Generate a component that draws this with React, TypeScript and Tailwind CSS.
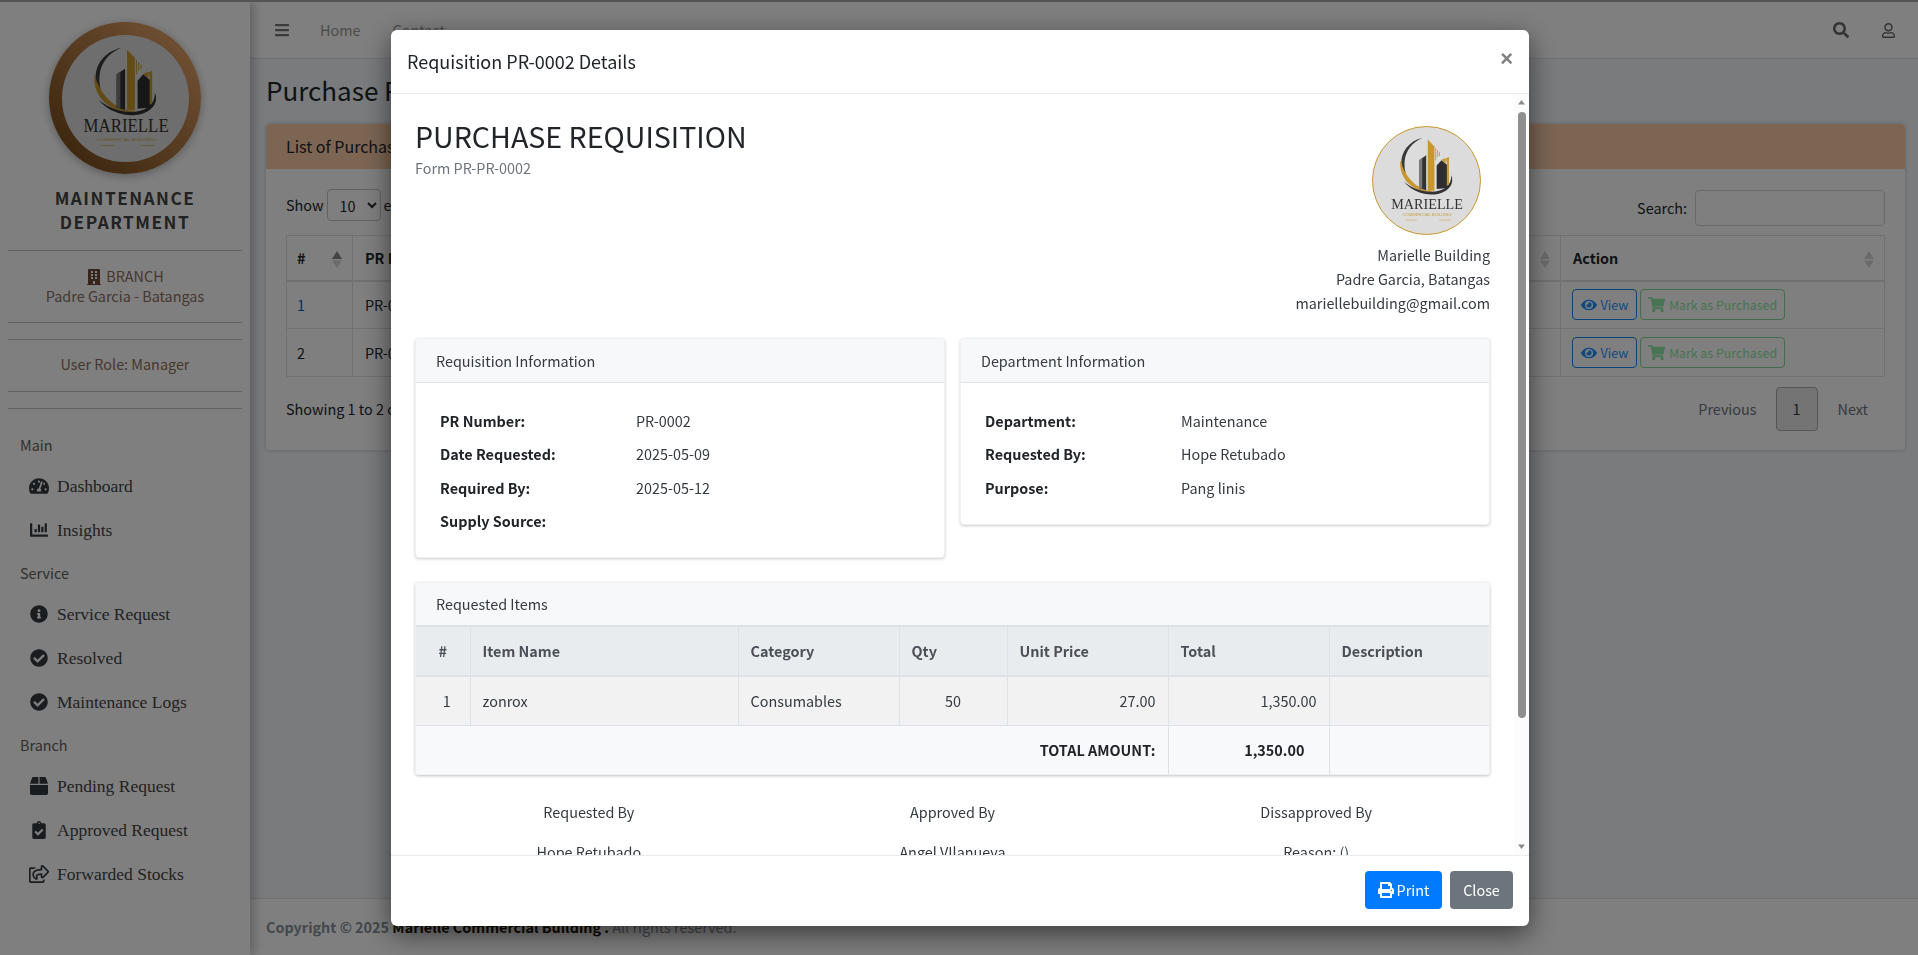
import { FaBars, FaBox, FaBuilding, FaChartBar, FaCheckCircle, FaClipboardCheck, FaEye, FaInfoCircle, FaPrint, FaRegShareSquare, FaRegUser, FaSearch, FaShoppingCart, FaTachometerAlt } from 'react-icons/fa';

const navSections = [
  {
    title: 'Main',
    items: [
      { name: 'Dashboard', icon: FaTachometerAlt, size: 'text-[20px]' },
      { name: 'Insights', icon: FaChartBar, size: 'text-[18px]' },
    ],
  },
  {
    title: 'Service',
    items: [
      { name: 'Service Request', icon: FaInfoCircle, size: 'text-[18px]' },
      { name: 'Resolved', icon: FaCheckCircle, size: 'text-[18px]' },
      { name: 'Maintenance Logs', icon: FaCheckCircle, size: 'text-[18px]' },
    ],
  },
  {
    title: 'Branch',
    items: [
      { name: 'Pending Request', icon: FaBox, size: 'text-[18px]' },
      { name: 'Approved Request', icon: FaClipboardCheck, size: 'text-[18px]' },
      { name: 'Forwarded Stocks', icon: FaRegShareSquare, size: 'text-[20px]' },
    ],
  },
];

const requisitionInfo = [
  { label: 'PR Number:', value: 'PR-0002' },
  { label: 'Date Requested:', value: '2025-05-09' },
  { label: 'Required By:', value: '2025-05-12' },
  { label: 'Supply Source:', value: '' },
];

const departmentInfo = [
  { label: 'Department:', value: 'Maintenance' },
  { label: 'Requested By:', value: 'Hope Retubado' },
  { label: 'Purpose:', value: 'Pang linis' },
];

const signatures = [
  { title: 'Requested By', name: 'Hope Retubado' },
  { title: 'Approved By', name: 'Angel VIlanueva' },
  { title: 'Dissapproved By', name: 'Reason: ()' },
];

function Logo({ size }: { size: number }) {
  return (
    <svg width={size} height={size} viewBox="0 0 100 100" className="block">
      <path d="M46.6 10 C33 13 26 24 26.5 34 C27 44 32 50 37 54 C31 48 29 40 29.5 33 C30 22 37 14 46.6 10 Z" fill="#3a3a3a" />
      <path d="M25.5 31 C24 45 33 58 50 60.5 C53 61 56 60.5 58 60 C44 60 31 50 25.5 31 Z" fill="#c8982f" />
      <path d="M28.7 51 C36 60 48 64 58 63 C68 62 75 56 74 48 L73 45 C74 54 66 60 56 60.5 C46 61 36 57 28.7 51 Z" fill="#333333" />
      <path d="M43 31 L49.7 26.5 V59 L43 57 Z" fill="#333333" />
      <path d="M43 31 L46 29 V58 L43 57 Z" fill="#7a7a7a" />
      <path d="M51.2 11.7 L57.4 18.2 V59.5 H51.2 Z" fill="#c8982f" />
      <path d="M58.2 19 L59 20 V31 H58.2 Z M60 21 L60.8 22 V28 H60 Z M61.8 23 L62.6 24 V27 H61.8 Z" fill="#c8982f" />
      <path d="M59.5 36 L64 31 L70 36 V57 L59.5 58 Z" fill="#2e2e2e" />
      <path d="M64 30.5 L68 29 L68 34 Z M68 29.5 L71 28 V54 L69 55 V33 Z" fill="#c8982f" />
      <text x="50.5" y="76.5" textAnchor="middle" textLength="67" lengthAdjust="spacingAndGlyphs" fontFamily="Liberation Serif" fontSize="14" fill="#333333">MARIELLE</text>
      <text x="50.5" y="83.5" textAnchor="middle" textLength="46" lengthAdjust="spacingAndGlyphs" fontFamily="Liberation Sans" fontSize="3" fill="#c8a44d">COMMERCIAL BUILDING</text>
      <path d="M30 87 H41 M62 87 H73" stroke="#c8a44d" strokeWidth="0.5" />
    </svg>
  );
}

function SortArrows({ active = false }: { active?: boolean }) {
  return (
    <svg width="10" height="17" viewBox="0 0 10 17" className="absolute right-2.5 top-[15px]">
      <path d="M5 0 L10 8 H0 Z" fill={active ? '#888888' : '#d6d6d6'} />
      <path d="M5 17 L0 9.5 H10 Z" fill="#d6d6d6" />
    </svg>
  );
}

function InfoCard({ title, rows, className }: { title: string; rows: { label: string; value: string }[]; className: string }) {
  return (
    <div className={`overflow-hidden rounded border border-[#f0f0f0] bg-white shadow-[0_1px_3px_rgba(0,0,0,0.2)] ${className}`}>
      <div className="flex h-[44px] items-center border-b border-[#dfe1e3] bg-[#f7f8fa] px-5 text-[#343a40]">{title}</div>
      <div className="pb-[19px] pl-[24px] pr-5 pt-[21px]">
        {rows.map((row) => (
          <div key={row.label} className="flex h-[33.5px] items-center">
            <div className="w-[196px] font-bold text-[#212529]">{row.label}</div>
            <div className="text-[#343a40]">{row.value}</div>
          </div>
        ))}
      </div>
    </div>
  );
}

function Sidebar() {
  return (
    <aside className="relative z-10 flex w-[250px] shrink-0 flex-col bg-white px-2 pt-[20px] shadow-[4px_0_10px_rgba(0,0,0,0.25)]">
      <div className="mx-auto flex h-[152px] w-[152px] items-center justify-center rounded-full bg-gradient-to-tr from-[#6b4312] to-[#f2ae72] shadow-[0_2px_10px_rgba(0,0,0,0.3)]">
        <div className="overflow-hidden rounded-full bg-[#dcdcdc]">
          <Logo size={127} />
        </div>
      </div>
      <div className="mt-3 text-center text-[17.2px] font-bold leading-6 tracking-[1.5px] text-[#444444]">
        MAINTENANCE
        <br />
        DEPARTMENT
      </div>
      <div className="mt-4 border-y border-[#c4c4c4] pb-[17px] pt-[15px] text-center leading-[19px] text-[#8a6f5e]">
        <FaBuilding className="mr-1 inline-block -translate-y-px text-[16px] text-[#6b4a38]" />
        BRANCH
        <br />
        Padre Garcia - Batangas
      </div>
      <div className="mt-4 border-y border-[#c4c4c4] pb-[15px] pt-[12px] text-center text-[#8a6f5e]">User Role: Manager</div>
      <div className="mt-4 border-t border-[#c4c4c4]" />
      <nav className="mt-[15px]">
        {navSections.map((section) => (
          <div key={section.title}>
            <div className="flex h-[40px] items-center px-3 pt-[2px] text-[#606060]">{section.title}</div>
            {section.items.map((item) => (
              <div key={item.name} className="flex h-[44px] items-center pl-[15px] font-['Liberation_Serif',serif] text-[17.5px] text-[#444444]">
                <span className="flex w-[34px] justify-center pr-[3px]">
                  <item.icon className={`${item.size} text-[#343a40]`} />
                </span>
                {item.name}
              </div>
            ))}
          </div>
        ))}
      </nav>
    </aside>
  );
}

function ListPage() {
  return (
    <main className="flex min-w-0 flex-1 flex-col bg-[#f4f6f9]">
      <header className="flex h-[57px] shrink-0 items-center border-b border-[#dee2e6] bg-white pl-6 text-[#999999]">
        <FaBars className="text-[16px] text-[#777777]" />
        <span className="ml-[30px]">Home</span>
        <span className="ml-8">Contact</span>
        <div className="ml-auto flex items-center gap-8 pr-[22px]">
          <FaSearch className="text-[16px] text-[#666666]" />
          <FaRegUser className="text-[15px] text-[#666666]" />
        </div>
      </header>
      <h1 className="ml-4 mt-[14px] text-[26px] leading-[34px] text-[#212529]">Purchase Requisition</h1>
      <section className="ml-4 mr-[13px] mt-[17px] h-[326px] rounded bg-white shadow-[0_0_4px_rgba(0,0,0,0.2)]">
        <div className="flex h-[45px] items-center rounded-t bg-[#fbcba7] px-5 pb-[2px] text-base text-[#212529]">List of Purchase Requisitions</div>
        <div className="px-5 pt-[21px]">
          <div className="flex h-[36px] items-start justify-between">
            <div className="flex -translate-y-px items-center gap-[3px]">
              Show
              <select defaultValue="10" className="h-[32px] w-[54px] rounded border border-[#c5c5c5] bg-white pl-2">
                <option value="10">10</option>
              </select>
              entries
            </div>
            <div className="flex items-center gap-2">
              Search:
              <div className="h-[36px] w-[190px] rounded border border-[#ced4da] bg-white" />
            </div>
          </div>
          <table className="mt-[9px] w-full table-fixed border-collapse border border-[#dee2e6]">
            <colgroup>
              <col className="w-[66px]" />
              <col />
              <col className="w-[324px]" />
            </colgroup>
            <thead>
              <tr className="h-[45px] border-b-2 border-[#dee2e6]">
                <th className="relative border-r border-[#dee2e6] px-2.5 text-left">
                  #
                  <SortArrows active />
                </th>
                <th className="relative border-r border-[#dee2e6] px-3 text-left">
                  PR Number
                  <SortArrows />
                </th>
                <th className="relative px-3 text-left">
                  Action
                  <SortArrows />
                </th>
              </tr>
            </thead>
            <tbody>
              {['PR-0001', 'PR-0002'].map((pr, index) => (
                <tr key={pr} className="h-[48px] border-b border-[#dee2e6]">
                  <td className={`border-r border-[#dee2e6] px-2.5 ${index === 0 ? 'text-[#0f5aa8]' : ''}`}>{index + 1}</td>
                  <td className="border-r border-[#dee2e6] px-3">{pr}</td>
                  <td className="px-[11px]">
                    <div className="flex gap-[3px] text-[12.6px]">
                      <span className="flex h-[31px] w-[65px] items-center justify-center gap-1 rounded border border-[#1088ff] text-[#1c93ff]">
                        <FaEye className="text-[16px]" />
                        View
                      </span>
                      <span className="flex h-[31px] w-[145px] items-center justify-center gap-1 rounded border border-[#80dc98] text-[12.4px] text-[#90e8a6]">
                        <FaShoppingCart className="text-[17px]" />
                        Mark as Purchased
                      </span>
                    </div>
                  </td>
                </tr>
              ))}
            </tbody>
          </table>
          <div className="mt-[10px] flex items-start justify-between">
            <div className="pt-[10px]">Showing 1 to 2 of 2 entries</div>
            <div className="flex items-center pr-[17px] text-[#6c757d]">
              <span>Previous</span>
              <span className="ml-[19px] flex h-[44px] w-[42px] items-center justify-center rounded-sm border border-[#adadad] bg-[#e9e9e9] text-[#333333]">1</span>
              <span className="ml-[20px]">Next</span>
            </div>
          </div>
        </div>
      </section>
      <footer className="mt-auto flex h-[57px] shrink-0 items-center border-t border-[#dee2e6] bg-white pb-[1px] pl-4 text-[#869099]">
        <strong>Copyright © 2025&nbsp;</strong>
        <strong className="text-[#1f1300]">Marielle Commercial Building .</strong>
        <span>&nbsp;All rights reserved.</span>
      </footer>
    </main>
  );
}

function RequisitionModal() {
  return (
    <div className="fixed left-[391px] top-[30px] flex h-[896px] w-[1138px] flex-col overflow-hidden rounded-md bg-white text-[#212529] shadow-[0_8px_28px_rgba(0,0,0,0.55)]">
      <div className="flex h-[64px] shrink-0 items-center justify-between border-b border-[#e9ecef] pl-[16px] pr-[16px]">
        <h5 className="-translate-y-px text-[18px] leading-6">Requisition PR-0002 Details</h5>
        <span className="-translate-y-[3px] font-['Liberation_Sans',sans-serif] text-[22px] font-bold leading-none text-[#7f7f7f]">×</span>
      </div>

      <div className="relative min-h-0 flex-1 overflow-hidden pl-6 pr-[39px] pt-[25px]">
        <div className="flex h-[219px] justify-between">
          <div>
            <h2 className="text-[28.6px] leading-[34px] text-[#212529]">PURCHASE REQUISITION</h2>
            <div className="mt-[3px] text-[#6c757d]">Form PR-PR-0002</div>
          </div>
          <div className="flex flex-col items-end">
            <div className="mr-[9px] mt-[7px] overflow-hidden rounded-full border border-[#c8982f] bg-[#dcdcdc]">
              <Logo size={107} />
            </div>
            <div className="mt-[8px] text-right text-[#343a40]">
              Marielle Building
              <br />
              Padre Garcia, Batangas
              <br />
              mariellebuilding@gmail.com
            </div>
          </div>
        </div>

        <div className="flex items-start gap-[15px]">
          <InfoCard title="Requisition Information" rows={requisitionInfo} className="w-[530px]" />
          <InfoCard title="Department Information" rows={departmentInfo} className="flex-1" />
        </div>

        <div className="mt-6 overflow-hidden rounded border border-[#f0f0f0] shadow-[0_1px_3px_rgba(0,0,0,0.25)]">
          <div className="flex h-[42px] items-center bg-[#f7f8fa] px-5 text-[#343a40]">Requested Items</div>
          <table className="w-full table-fixed border-collapse text-[#343a40]">
            <colgroup>
              <col className="w-[54px]" />
              <col className="w-[268px]" />
              <col className="w-[161px]" />
              <col className="w-[108px]" />
              <col className="w-[161px]" />
              <col className="w-[161px]" />
              <col />
            </colgroup>
            <thead>
              <tr className="h-[50px] border-y-2 border-[#dee2e6] bg-[#e9ecef] text-left font-bold text-[#495057]">
                <th className="border-r border-[#dee2e6] text-center">#</th>
                <th className="border-r border-[#dee2e6] px-3">Item Name</th>
                <th className="border-r border-[#dee2e6] px-3">Category</th>
                <th className="border-r border-[#dee2e6] px-3">Qty</th>
                <th className="border-r border-[#dee2e6] px-3">Unit Price</th>
                <th className="border-r border-[#dee2e6] px-3">Total</th>
                <th className="px-3">Description</th>
              </tr>
            </thead>
            <tbody>
              <tr className="h-[49px] border-b border-[#dee2e6] bg-[#f2f2f2]">
                <td className="border-r border-[#dee2e6] pl-2 text-center">1</td>
                <td className="border-r border-[#dee2e6] px-3">zonrox</td>
                <td className="border-r border-[#dee2e6] px-3">Consumables</td>
                <td className="border-r border-[#dee2e6] px-3 text-center">50</td>
                <td className="border-r border-[#dee2e6] px-3 text-right">27.00</td>
                <td className="border-r border-[#dee2e6] px-3 text-right">1,350.00</td>
                <td />
              </tr>
              <tr className="h-[49px] bg-[#f8f9fa] font-bold text-[#212529]">
                <td colSpan={5} className="border-r border-[#dee2e6] px-3 text-right">TOTAL AMOUNT:</td>
                <td className="border-r border-[#dee2e6] pr-6 text-right">1,350.00</td>
                <td />
              </tr>
            </tbody>
          </table>
        </div>

        <div className="-mx-2 mt-[25px] grid grid-cols-3 text-center text-[#343a40]">
          {signatures.map((signature) => (
            <div key={signature.title}>
              <div>{signature.title}</div>
              <div className="mt-4">{signature.name}</div>
            </div>
          ))}
        </div>

        <div className="absolute bottom-0 right-0 top-0 w-[15px] bg-[#fcfcfc]">
          <svg width="15" height="15" viewBox="0 0 15 15" className="absolute left-0 top-[2px]">
            <path d="M7.5 4 L11 8.5 H4 Z" fill="#8a8a8a" />
          </svg>
          <div className="absolute left-1 top-[18px] h-[606px] w-[8px] rounded bg-[#8f8f8f]" />
          <svg width="15" height="15" viewBox="0 0 15 15" className="absolute bottom-[2px] left-0">
            <path d="M7.5 11 L11 6.5 H4 Z" fill="#8a8a8a" />
          </svg>
        </div>
      </div>

      <div className="flex h-[71px] shrink-0 items-center justify-end gap-2 border-t border-[#e9ecef] pb-[2px] pr-4">
        <button className="flex h-[38px] w-[77px] items-center justify-center gap-[3px] rounded bg-[#007bff] text-white">
          <FaPrint className="text-[16px]" />
          Print
        </button>
        <button className="h-[38px] w-[63px] rounded bg-[#6c757d] text-white">Close</button>
      </div>
    </div>
  );
}

export default function App() {
  return (
    <div className="relative h-[955px] w-full overflow-hidden border-t-2 border-[#a8a8a8] font-['Noto_Sans_CJK_SC',sans-serif] text-[14.4px] leading-6 text-[#212529]">
      <div className="flex h-full">
        <Sidebar />
        <ListPage />
      </div>
      <div className="fixed inset-0 z-20 bg-black/50" />
      <div className="relative z-30">
        <RequisitionModal />
      </div>
    </div>
  );
}
